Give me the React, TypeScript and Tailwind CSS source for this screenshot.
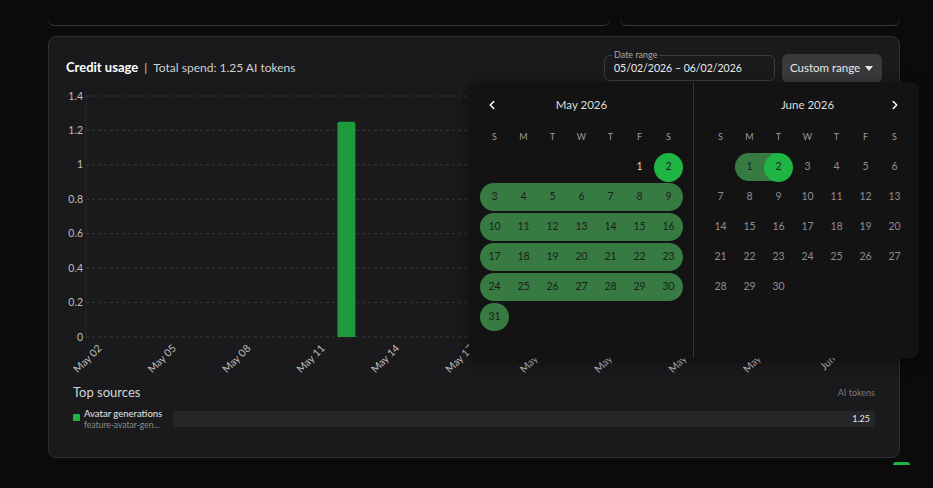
import { ChevronLeft, ChevronRight } from "lucide-react";

const Y_TICKS = [1.4, 1.2, 1, 0.8, 0.6, 0.4, 0.2, 0];
const X_LABELS = [
  "May 02", "May 05", "May 08", "May 11", "May 14", "May 17",
  "May 20", "May 23", "May 26", "May 29", "Jun 01",
];

// chart geometry, in svg units
const PLOT_LEFT = 20;
const PLOT_TOP = 10;
const PLOT_BOTTOM = 251;
const BAND = 24.8;
const MAX = 1.4;

const yFor = (v: number) => PLOT_BOTTOM - (v / MAX) * (PLOT_BOTTOM - PLOT_TOP);

function UsageChart() {
  const barIndex = 10; // May 12
  const barX = PLOT_LEFT + (barIndex + 0.5) * BAND - 9;
  return (
    <svg width={816} height={290} className="mt-[3px] block">
      <line x1={PLOT_LEFT} x2={PLOT_LEFT} y1={PLOT_TOP} y2={PLOT_BOTTOM} stroke="#262628" />
      {Y_TICKS.map((t) => (
        <g key={t}>
          <line
            x1={PLOT_LEFT}
            x2={814}
            y1={yFor(t)}
            y2={yFor(t)}
            stroke="#38383b"
            strokeDasharray="3 3"
          />
          <text x={17} y={yFor(t) + 3.5} textAnchor="end" fontSize={10.5} fill="#bdbdbd">
            {t}
          </text>
        </g>
      ))}
      <path
        d={`M${barX} ${PLOT_BOTTOM} V${yFor(1.25) + 2} Q${barX} ${yFor(1.25)} ${barX + 2} ${yFor(1.25)} H${barX + 16} Q${barX + 18} ${yFor(1.25)} ${barX + 18} ${yFor(1.25) + 2} V${PLOT_BOTTOM} Z`}
        fill="#1f9a3b"
      />
      {X_LABELS.map((label, k) => {
        const x = PLOT_LEFT + (k * 3 + 0.5) * BAND + 4;
        return (
          <text
            key={label}
            x={x}
            y={263}
            textAnchor="end"
            fontSize={10.5}
            fill="#bdbdbd"
            transform={`rotate(-45 ${x} 263)`}
          >
            {label}
          </text>
        );
      })}
    </svg>
  );
}

type Mark = "start" | "end" | "mid" | null;

type MonthProps = {
  title: string;
  lead: number;
  days: number;
  mark: (d: number) => Mark;
  dim: boolean;
  side: "left" | "right";
};

function MonthGrid({ title, lead, days, mark, dim, side }: MonthProps) {
  const cells: (number | null)[] = [
    ...Array.from({ length: lead }, () => null),
    ...Array.from({ length: days }, (_, i) => i + 1),
  ];
  const weeks: (number | null)[][] = [];
  for (let i = 0; i < cells.length; i += 7) weeks.push(cells.slice(i, i + 7));

  return (
    <div className={side === "left" ? "w-[224px] pl-[11px]" : "w-[225px] pl-[12px]"}>
      <div className="relative flex h-[46px] w-[203px] items-center justify-center text-[11.5px] text-[#dedede]">
        {side === "left" && (
          <ChevronLeft size={14} strokeWidth={2.5} className="absolute left-[5px] text-white" />
        )}
        {title}
        {side === "right" && (
          <ChevronRight size={14} strokeWidth={2.5} className="absolute right-[7px] text-white" />
        )}
      </div>
      <div className="grid h-[18px] grid-cols-[repeat(7,29px)] items-center text-center text-[9px] text-[#9c9c9c]">
        {["S", "M", "T", "W", "T", "F", "S"].map((w, i) => (
          <span key={i}>{w}</span>
        ))}
      </div>
      <div className="mt-[6px]">
        {weeks.map((week, wi) => (
          <div key={wi} className="grid h-[30px] grid-cols-[repeat(7,29px)]">
            {week.map((d, col) => {
              if (d === null) return <div key={col} />;
              const m = mark(d);
              const prev = col > 0 && week[col - 1] !== null ? mark(week[col - 1] as number) : null;
              const next = col < week.length - 1 ? mark(week[col + 1] as number) : null;
              let band = "";
              if (m === "mid") {
                band = "inset-x-0";
                if (!prev) band += " rounded-l-full";
                if (!next || col === 6) band += " rounded-r-full";
              } else if (m === "start" && col < 6) band = "left-1/2 right-0";
              else if (m === "end" && col > 0) band = "left-0 right-1/2";
              const edge = m === "start" || m === "end";
              return (
                <div key={col} className="relative flex items-center justify-center">
                  {band && <div className={`absolute inset-y-[1px] bg-[#377a42] ${band}`} />}
                  {edge && <div className="absolute inset-y-[0.5px] inset-x-0 rounded-full bg-[#1fb443]" />}
                  <span
                    className={`relative text-[10.5px] ${
                      m ? "text-[#1b1f1c]" : dim ? "text-[#8d8d8d]" : "text-[#d6d6d6]"
                    }`}
                  >
                    {d}
                  </span>
                </div>
              );
            })}
          </div>
        ))}
      </div>
    </div>
  );
}

function RangePopover() {
  return (
    <div className="absolute left-[420px] top-[45px] flex h-[276px] w-[450px] rounded-[8px] bg-[#131314] shadow-[0_4px_16px_rgba(0,0,0,0.45)]">
      <MonthGrid
        title="May 2026"
        lead={5}
        days={31}
        side="left"
        dim={false}
        mark={(d) => (d === 2 ? "start" : d > 2 ? "mid" : null)}
      />
      <div className="w-px bg-[#333335]" />
      <MonthGrid
        title="June 2026"
        lead={1}
        days={30}
        side="right"
        dim
        mark={(d) => (d === 1 ? "mid" : d === 2 ? "end" : null)}
      />
    </div>
  );
}

export default function App() {
  return (
    <div className="relative h-[488px] w-[933px] overflow-hidden bg-[#0b0b0c] pl-[48px] font-[Lato,'Noto_Sans',sans-serif]">
      {/* cards above, scrolled out of view except their bottom edge */}
      <div className="flex h-[26px] items-end gap-[10px] overflow-hidden">
        <div className="h-[26px] w-[562px] shrink-0 rounded-b-[7px] border-b border-[#38383b]" />
        <div className="h-[26px] w-[280px] shrink-0 rounded-b-[7px] border-b border-[#38383b]" />
      </div>

      <section className="relative mt-[10px] h-[422px] w-[852px] rounded-[8px] border border-[#303033] bg-[#1a1a1c] px-[17px] pt-[16px]">
        <div className="flex h-[30px] items-center justify-between">
          <div className="flex items-center text-[12px] text-[#d0d0d0]">
            <span className="text-[13px] font-bold text-white">Credit usage</span>
            <span className="mx-[6px]">|</span>
            Total spend: 1.25 AI tokens
          </div>
          <div className="flex items-center gap-[7px]">
            <div className="relative h-[26px] w-[171px] rounded-[6px] border border-[#3d3d40]">
              <span className="absolute -top-[7px] left-[7px] bg-[#1a1a1c] px-[2px] text-[9px] leading-[12px] text-[#a6a6a6]">
                Date range
              </span>
              <div className="flex h-full items-center whitespace-nowrap pl-[9px] pt-[1px] text-[10.5px] text-[#ececec]">
                05/02/2026 – 06/02/2026
              </div>
            </div>
            <button className="flex h-[29px] w-[100px] items-center gap-[5px] whitespace-nowrap rounded-[6px] bg-[#3a3a3d] pl-[8px] text-[11.5px] text-[#e8e8e8]">
              Custom range
              <svg width={8} height={5} viewBox="0 0 8 5">
                <path d="M0 0h8L4 5z" fill="#e8e8e8" />
              </svg>
            </button>
          </div>
        </div>

        <UsageChart />

        <div className="px-[7px]">
          <div className="mt-[10px] flex h-[14px] items-center justify-between">
            <span className="text-[13px] text-[#d4d4d4]">Top sources</span>
            <span className="text-[9px] text-[#7a7a7c]">AI tokens</span>
          </div>
          <div className="mt-[8px] flex h-[22px] items-center">
            <div className="flex w-[100px] shrink-0 items-start gap-[4px]">
              <div className="mt-[6px] h-[7px] w-[7px] shrink-0 rounded-[1px] bg-[#1fb443]" />
              <div className="min-w-0">
                <div className="whitespace-nowrap text-[9.5px] leading-[12px] text-[#e6e6e6]">Avatar generations</div>
                <div className="w-[84px] whitespace-nowrap text-[8.5px] leading-[11px] text-[#8a8a8a]">
                  feature-avatar-gen...
                </div>
              </div>
            </div>
            <div className="flex h-[16px] flex-1 items-center justify-end rounded-[3px] bg-[#262628] pr-[5px] text-[9px] text-[#e6e6e6]">
              1.25
            </div>
          </div>
        </div>

        <RangePopover />
      </section>

      {/* floating action button peeking in at the bottom */}
      <div className="absolute left-[893px] top-[462px] h-[3px] w-[17px] rounded-t-full bg-[#1fb443]" />
    </div>
  );
}
